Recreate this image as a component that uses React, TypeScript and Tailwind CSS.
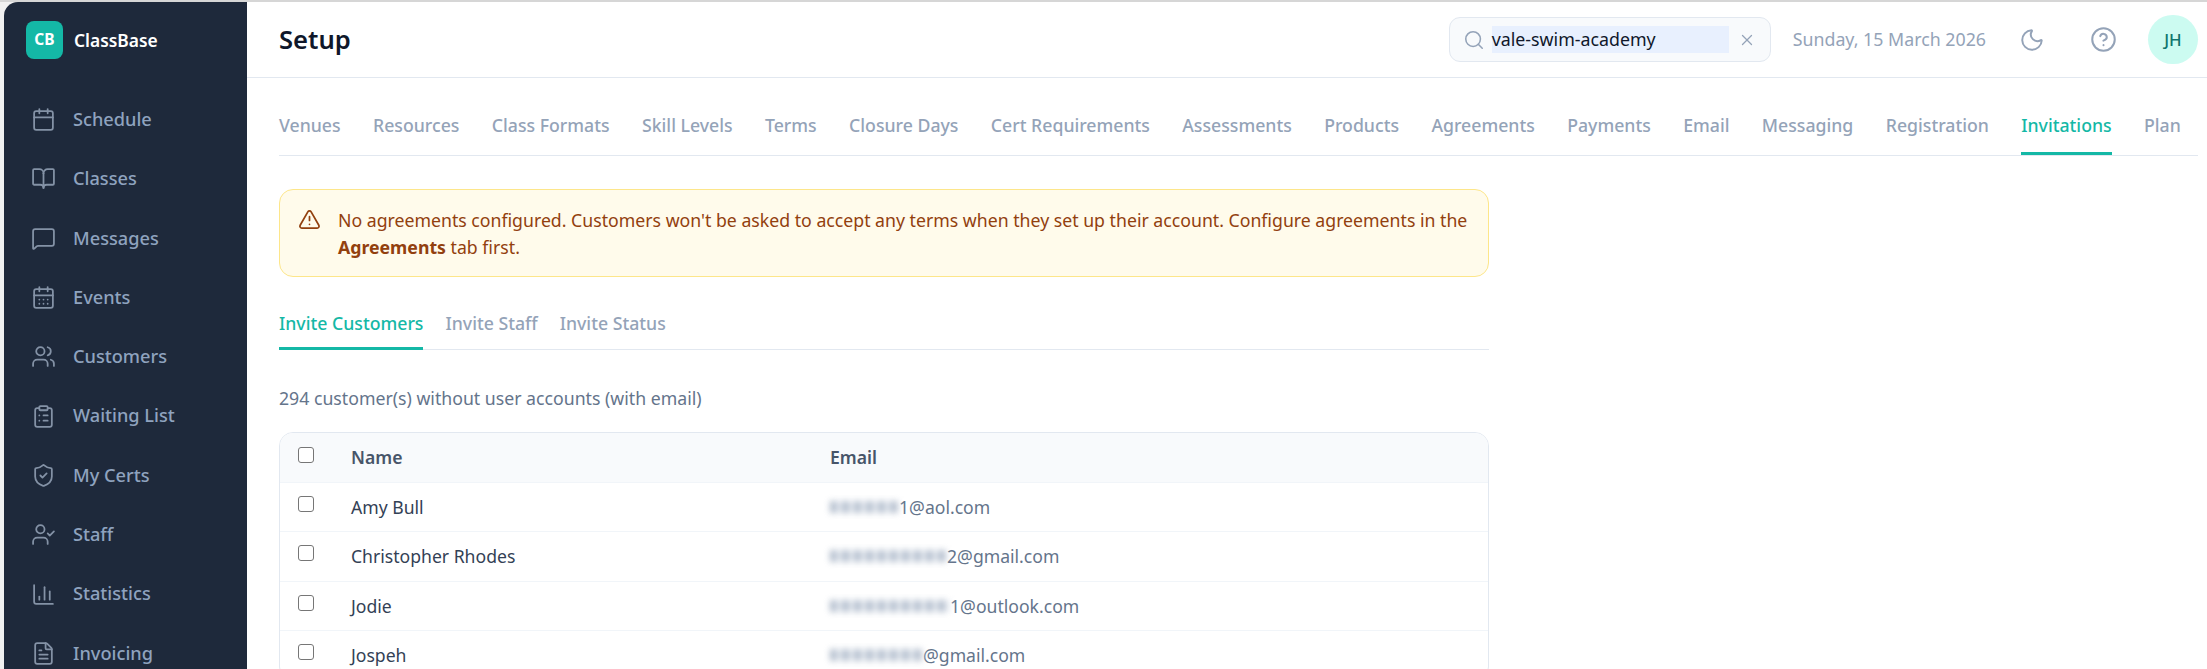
import {
  BookOpen,
  Calendar,
  CalendarDays,
  ChartColumn,
  CircleHelp,
  ClipboardList,
  FileText,
  MessageSquare,
  Moon,
  Search,
  ShieldCheck,
  TriangleAlert,
  UserCheck,
  Users,
  X,
} from 'lucide-react';

const navItems = [
  { label: 'Schedule', icon: Calendar },
  { label: 'Classes', icon: BookOpen },
  { label: 'Messages', icon: MessageSquare },
  { label: 'Events', icon: CalendarDays },
  { label: 'Customers', icon: Users },
  { label: 'Waiting List', icon: ClipboardList },
  { label: 'My Certs', icon: ShieldCheck },
  { label: 'Staff', icon: UserCheck },
  { label: 'Statistics', icon: ChartColumn },
  { label: 'Invoicing', icon: FileText },
];

const setupTabs = [
  'Venues',
  'Resources',
  'Class Formats',
  'Skill Levels',
  'Terms',
  'Closure Days',
  'Cert Requirements',
  'Assessments',
  'Products',
  'Agreements',
  'Payments',
  'Email',
  'Messaging',
  'Registration',
  'Invitations',
  'Plan',
];

// the first part of each address is smudged in the picture
const customers = [
  { name: 'Amy Bull', hiddenWidth: 'w-[69px]', email: '1@aol.com' },
  { name: 'Christopher Rhodes', hiddenWidth: 'w-[117px]', email: '2@gmail.com' },
  { name: 'Jodie', hiddenWidth: 'w-[120px]', email: '1@outlook.com' },
  { name: 'Jospeh', hiddenWidth: 'w-[93px]', email: '@gmail.com' },
];

const Checkbox = () => (
  <input type="checkbox" className="mb-[6px] h-[16px] w-[16px] appearance-none rounded-[3px] border border-[#767676] bg-white" />
);

export default function App() {
  return (
    <div className="flex h-[669px] w-[2207px] overflow-hidden border-t-2 border-[#d6d6d6] bg-[#f1f1f1] pl-[4px] font-['Noto_Sans',sans-serif]">
      <aside className="w-[243px] shrink-0 rounded-tl-[14px] bg-[#1e293b]">
        <div className="flex h-[75px] items-center gap-[11px] pl-[22px]">
          <div className="flex h-[38px] w-[37px] items-center justify-center rounded-[8px] bg-[#14b8a6] text-[15.5px] font-bold text-white">
            CB
          </div>
          <span className="pt-[2px] text-[17.4px] font-semibold text-white">ClassBase</span>
        </div>
        <nav className="pt-[13px]">
          {navItems.map(({ label, icon: Icon }) => (
            <div key={label} className="flex h-[59.3px] items-center gap-[17px] pl-[27px] text-[18.2px] font-medium text-[#8fa3bf]">
              <Icon className="h-[25px] w-[25px] text-[#8492a6]" strokeWidth={1.7} />
              <span>{label}</span>
            </div>
          ))}
        </nav>
      </aside>

      <main className="min-w-0 flex-1 bg-white">
        <header className="flex h-[76px] items-center border-b border-[#e2e8f0] pl-[32px] pr-[9px]">
          <h1 className="pt-[2px] text-[25.6px] font-semibold text-[#0f172a]">Setup</h1>
          <div className="ml-auto flex items-center">
            <div className="flex h-[45px] w-[322px] items-center rounded-[11px] border border-[#e2e8f0] bg-[#f8fafc] pl-[13px]">
              <Search className="h-[22px] w-[22px] text-[#94a3b8]" strokeWidth={1.7} />
              <div className="ml-[7px] h-[27px] w-[237px] bg-[#e8f0fe] text-[17.8px] leading-[27px] text-[#0f172a]">vale-swim-academy</div>
              <X className="ml-[9px] h-[18px] w-[18px] text-[#94a3b8]" strokeWidth={1.7} />
            </div>
            <span className="ml-[22px] text-[17.8px] text-[#94a3b8]">Sunday, 15 March 2026</span>
            <Moon className="ml-[33px] h-[26px] w-[26px] text-[#94a3b8]" strokeWidth={1.8} />
            <CircleHelp className="ml-[45px] h-[27px] w-[27px] text-[#94a3b8]" strokeWidth={1.8} />
            <div className="ml-[31px] flex h-[49px] w-[50px] items-center justify-center rounded-full bg-[#ccfbf1] text-[16.9px] font-medium text-[#0f766e]">
              JH
            </div>
          </div>
        </header>

        <div className="pl-[32px] pr-[9px]">
          <div className="flex h-[78px] items-end gap-[32.4px] border-b border-[#e2e8f0]">
            {setupTabs.map((tab) => (
              <div
                key={tab}
                className={
                  tab === 'Invitations'
                    ? 'flex h-[50px] items-center border-b-[3px] border-[#14b8a6] pb-[6px] text-[17.7px] font-medium whitespace-nowrap text-[#14b8a6]'
                    : 'flex h-[50px] items-center pb-[9px] text-[17.7px] font-medium whitespace-nowrap text-[#94a3b8]'
                }
              >
                {tab}
              </div>
            ))}
          </div>

          <div className="w-[1210px] pt-[33px]">
            <div className="flex h-[88px] items-start gap-[17px] rounded-[14px] border border-[#fde68a] bg-[#fffbeb] px-[18px] pt-[17px] text-[17.7px] leading-[27px] text-[#92400e]">
              <TriangleAlert className="mt-[1px] h-[23px] w-[23px] shrink-0" strokeWidth={1.8} />
              <p>
                No agreements configured. Customers won't be asked to accept any terms when they set up their account. Configure agreements in the <strong className="font-bold">Agreements</strong> tab first.
              </p>
            </div>

            <div className="mt-[27px] flex h-[46px] gap-[22px] border-b border-[#e2e8f0] text-[17.7px] font-medium">
              <div className="h-[46px] border-b-[3px] border-[#14b8a6] pt-[6px] text-[#14b8a6]">Invite Customers</div>
              <div className="pt-[6px] text-[#94a3b8]">Invite Staff</div>
              <div className="pt-[6px] text-[#94a3b8]">Invite Status</div>
            </div>

            <p className="mt-[35px] text-[17.7px] leading-[27px] text-[#64748b]">294 customer(s) without user accounts (with email)</p>

            <div className="mt-[20px] overflow-hidden rounded-[14px] border border-[#e2e8f0]">
              <div className="flex h-[50px] items-center border-b border-[#f1f5f9] bg-[#f8fafc] pl-[18px] text-[17.6px] font-semibold text-[#475569]">
                <Checkbox />
                <span className="ml-[37px] w-[479px]">Name</span>
                <span>Email</span>
              </div>
              {customers.map((c) => (
                <div key={c.name} className="flex h-[49.3px] items-center border-b border-[#f1f5f9] pl-[18px] text-[17.6px]">
                  <Checkbox />
                  <span className="ml-[37px] w-[479px] text-[#334155]">{c.name}</span>
                  <span className="flex items-center text-[#64748b]">
                    <span className={`${c.hiddenWidth} h-[12px] bg-[repeating-linear-gradient(90deg,#94a3b8_0_7px,#e2e8f0_7px_12px)] opacity-70 blur-[3px]`} />
                    <span>{c.email}</span>
                  </span>
                </div>
              ))}
            </div>
          </div>
        </div>
      </main>
    </div>
  );
}
